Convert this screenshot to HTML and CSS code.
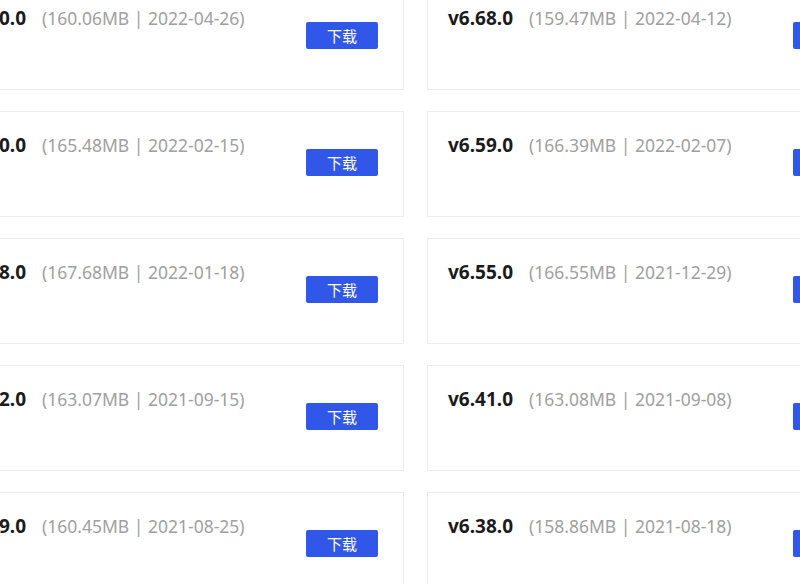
FILE: index.html
```html
<!DOCTYPE html>
<html>
 <head>
  <meta charset="utf-8">
  <link rel="stylesheet" href="styles.css">
 </head>
 <body>
  <div class="list">
   <div class="card">
    <div class="info"><span class="ver">v6.70.0</span><span class="meta">(160.06MB | 2022-04-26)</span></div>
    <button class="btn">下载</button>
   </div>
   <div class="card">
    <div class="info"><span class="ver">v6.68.0</span><span class="meta">(159.47MB | 2022-04-12)</span></div>
    <button class="btn">下载</button>
   </div>
   <div class="card">
    <div class="info"><span class="ver">v6.60.0</span><span class="meta">(165.48MB | 2022-02-15)</span></div>
    <button class="btn">下载</button>
   </div>
   <div class="card">
    <div class="info"><span class="ver">v6.59.0</span><span class="meta">(166.39MB | 2022-02-07)</span></div>
    <button class="btn">下载</button>
   </div>
   <div class="card">
    <div class="info"><span class="ver">v6.58.0</span><span class="meta">(167.68MB | 2022-01-18)</span></div>
    <button class="btn">下载</button>
   </div>
   <div class="card">
    <div class="info"><span class="ver">v6.55.0</span><span class="meta">(166.55MB | 2021-12-29)</span></div>
    <button class="btn">下载</button>
   </div>
   <div class="card">
    <div class="info"><span class="ver">v6.42.0</span><span class="meta">(163.07MB | 2021-09-15)</span></div>
    <button class="btn">下载</button>
   </div>
   <div class="card">
    <div class="info"><span class="ver">v6.41.0</span><span class="meta">(163.08MB | 2021-09-08)</span></div>
    <button class="btn">下载</button>
   </div>
   <div class="card">
    <div class="info"><span class="ver">v6.39.0</span><span class="meta">(160.45MB | 2021-08-25)</span></div>
    <button class="btn">下载</button>
   </div>
   <div class="card">
    <div class="info"><span class="ver">v6.38.0</span><span class="meta">(158.86MB | 2021-08-18)</span></div>
    <button class="btn">下载</button>
   </div>
  </div>
 </body>
</html>
```

FILE: styles.css
```css
body {
  margin: 0;
  background: #fff;
  overflow: hidden;
  font-family: "Noto Sans", "Noto Sans CJK SC", sans-serif;
}

/* the list is wider than the window, it is cut on both sides */
.list {
  display: grid;
  grid-template-columns: 464px 464px;
  column-gap: 23px;
  row-gap: 21px;
  margin: -16px 0 0 -60px;
}

.card {
  display: flex;
  align-items: flex-start;
  height: 106px;
  box-sizing: border-box;
  border: 1px solid #ececec;
  padding: 19px 25px 0 20px;
}

.info {
  line-height: 28px;
  white-space: nowrap;
}

.ver {
  font-size: 19px;
  font-weight: bold;
  color: #1b1b1b;
  margin-right: 16px;
}

.meta {
  font-size: 17.5px;
  color: #a0a0a0;
}

.btn {
  margin-left: auto;
  margin-top: 18px;
  width: 72px;
  height: 27px;
  border: none;
  border-radius: 2px;
  background: #3057e8;
  color: #fff;
  font-family: "Noto Sans CJK SC", sans-serif;
  font-size: 15px;
  padding: 0;
}
```
